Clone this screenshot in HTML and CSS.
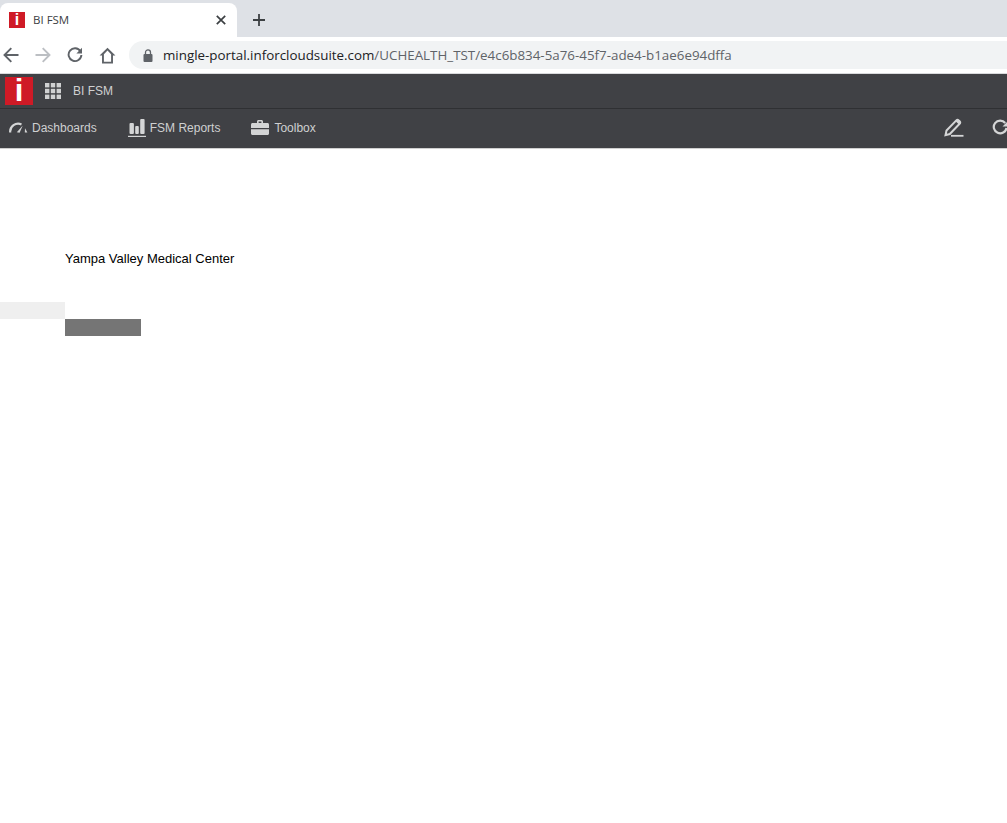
FILE: index.html
```html
<!DOCTYPE html>
<html lang="en">
<head>
<meta charset="utf-8">
<title>BI FSM</title>
<link rel="stylesheet" href="styles.css">
</head>
<body>
<div class="tabstrip">
  <div class="tab">
    <span class="favicon">i</span>
    <span class="tab-title">BI FSM</span>
    <svg class="tab-close" width="10" height="10" viewBox="0 0 10 10"><path d="M.8.8l8.4 8.4M9.2.8L.8 9.2" stroke="#3c4043" stroke-width="1.7" fill="none"/></svg>
  </div>
  <svg class="new-tab" width="12" height="12" viewBox="0 0 12 12"><path d="M6 0v12M0 6h12" stroke="#3c4043" stroke-width="1.8" fill="none"/></svg>
</div>
<div class="toolbar">
  <svg class="tb-icon" width="16" height="16" viewBox="0 0 16 16"><path d="M15.5 8H1.8M8.3 1.2L1.5 8l6.8 6.8" stroke="#5f6368" stroke-width="1.9" fill="none"/></svg>
  <svg class="tb-icon" width="16" height="16" viewBox="0 0 16 16"><path d="M.5 8h13.7M7.7 1.2L14.500 8l-6.800 6.800" stroke="#bcbfc3" stroke-width="1.900" fill="none"/></svg>
  <svg class="tb-icon" width="16" height="16" viewBox="0 0 16 16"><path d="M13.400 4.200A6.400 6.400 0 1 0 14.400 8" stroke="#5f6368" stroke-width="1.900" fill="none"/><path d="M15 .8v5.600H9.400z" fill="#5f6368"/></svg>
  <svg class="tb-home" width="17" height="17" viewBox="0 0 18 17"><path d="M9 .4L.6 8.600h2.600V17h11.600V8.600h2.600zM5.200 15V7.300L9 3.300l3.800 4V15z" fill="#5f6368" fill-rule="evenodd"/></svg>
  <div class="omnibox">
    <svg class="lock" width="10" height="13" viewBox="0 0 10 13"><rect x="0.5" y="5" width="9" height="8" rx="1" fill="#5f6368"/><path d="M2.500 5.500V3.400a2.500 2.500 0 0 1 5 0v2.100" stroke="#5f6368" stroke-width="1.300" fill="none"/></svg>
    <span class="url"><span class="host">mingle-portal.inforcloudsuite.com</span>/UCHEALTH_TST/e4c6b834-5a76-45f7-ade4-b1ae6e94dffa</span>
  </div>
</div>
<header class="app-bar">
  <span class="logo">i</span>
  <svg class="waffle" width="16" height="16" viewBox="0 0 16 16" fill="#d0d1d2"><rect width="4.400" height="4.400"/><rect x="5.800" width="4.400" height="4.400"/><rect x="11.600" width="4.400" height="4.400"/><rect y="5.800" width="4.400" height="4.400"/><rect x="5.800" y="5.800" width="4.400" height="4.400"/><rect x="11.600" y="5.800" width="4.400" height="4.400"/><rect y="11.600" width="4.400" height="4.400"/><rect x="5.800" y="11.600" width="4.400" height="4.400"/><rect x="11.600" y="11.600" width="4.400" height="4.400"/></svg>
  <span class="app-title">BI FSM</span>
</header>
<nav class="nav-bar">
  <a class="nav-item nav-dash">
    <svg width="19" height="11" viewBox="0 0 19 11"><path d="M1.200 10.500A8 8 0 0 1 12.500 2.400" stroke="#d4d5d6" stroke-width="2.200" fill="none"/><path d="M7.800 10.200l6-6.600-3.200 7.200z" fill="#d4d5d6"/><path d="M16 6.200l2.400 4.300h-2.600z" fill="#d4d5d6"/></svg>
    Dashboards
  </a>
  <a class="nav-item nav-reports">
    <svg width="18" height="19" viewBox="0 0 18 19" fill="#d4d5d6"><rect x="1.500" y="5" width="4.400" height="11" rx="1"/><rect x="7.200" y="8" width="3.600" height="8" rx="1"/><rect x="12.200" y="1" width="4.400" height="15" rx="1"/><rect y="17.800" width="18" height="1.200"/></svg>
    FSM Reports
  </a>
  <a class="nav-item nav-tool">
    <svg width="18" height="15" viewBox="0 0 18 15" fill="#d4d5d6"><path d="M6 3V1.500C6 .7 6.700 0 7.500 0h3c.8 0 1.500.7 1.500 1.500V3h-1.600V1.600H7.600V3z"/><path d="M1.500 3h15c.8 0 1.500.7 1.500 1.500V8H0V4.500C0 3.700.7 3 1.500 3z"/><path d="M0 9.300h18v4.200c0 .8-.7 1.500-1.500 1.500h-15C.7 15 0 14.300 0 13.500z"/></svg>
    Toolbox
  </a>
  <svg class="nav-edit" width="20" height="19" viewBox="0 0 20 19"><path d="M1.500 17.200l1-4.600L12.300 2.400a1.700 1.700 0 0 1 2.400 0l.9.900a1.700 1.700 0 0 1 0 2.400L5.800 16z" stroke="#d4d5d6" stroke-width="2" fill="none"/><path d="M11.500 3.200l4 3.800 1-1.500-.5-2.500-2.500-1z" fill="#d4d5d6"/><path d="M7 17.800h12.500" stroke="#d4d5d6" stroke-width="1.800"/></svg>
  <svg class="nav-refresh" width="17" height="17" viewBox="0 0 17 17"><path d="M13.200 4A6.400 6.400 0 1 0 14.500 9" stroke="#d4d5d6" stroke-width="2.200" fill="none"/><path d="M16.500 1.500v6h-6z" fill="#d4d5d6"/></svg>
</nav>
<main class="content">
  <p class="org">Yampa Valley Medical Center</p>
  <div class="row-light"></div>
  <div class="row-dark"></div>
</main>
</body>
</html>
```
FILE: styles.css
```css
html, body {
  margin: 0;
  height: 100%;
  overflow: hidden;
  background: #fff;
}
body {
  font-family: "Liberation Sans", Arial, sans-serif;
}
.tabstrip {
  height: 37px;
  box-sizing: border-box;
  padding-top: 3px;
  background: #dee1e6;
  display: flex;
}
.tab {
  width: 237px;
  height: 34px;
  box-sizing: border-box;
  padding-left: 9px;
  background: #fff;
  border-radius: 8px 8px 0 0;
  display: flex;
  align-items: center;
}
.favicon {
  width: 16px;
  height: 16px;
  background: #cf1a26;
  color: #fff;
  font: bold 16px/16px "Liberation Sans", sans-serif;
  text-align: center;
  flex: none;
}
.tab-title {
  margin: -2px 0 0 8px;
  font: 11.5px "Open Sans", sans-serif;
  color: #3c4043;
  flex: 1;
}
.tab-close {
  margin-right: 11px;
}
.new-tab {
  margin: 11px 0 0 16px;
}
.toolbar {
  height: 37px;
  box-sizing: border-box;
  padding-left: 3px;
  background: #fff;
  display: flex;
  align-items: center;
  border-bottom: 1px solid #d9dadc;
}
.tb-icon {
  margin-right: 16px;
  flex: none;
}
.tb-home {
  margin-right: 13px;
  flex: none;
}
.omnibox {
  flex: 1;
  height: 28px;
  padding-left: 14px;
  background: #f1f3f4;
  border-radius: 14px 0 0 14px;
  display: flex;
  align-items: center;
  min-width: 0;
}
.lock {
  flex: none;
  margin-right: 10px;
}
.url {
  font: 13.37px "Open Sans", sans-serif;
  color: #5f6368;
  white-space: nowrap;
}
.host {
  color: #202124;
}
.app-bar {
  height: 35px;
  box-sizing: border-box;
  background: #404145;
  border-bottom: 1px solid #2f3033;
  padding: 3px 0 0 5px;
  display: flex;
  align-items: flex-start;
}
.logo {
  width: 28px;
  height: 28px;
  background: #cf1a26;
  color: #fff;
  font: bold 31px/28px "Liberation Sans", sans-serif;
  text-align: center;
  flex: none;
}
.waffle {
  margin: 6px 0 0 12px;
}
.app-title {
  margin: 7px 0 0 12px;
  font-size: 12px;
  line-height: 15px;
  color: #cfd0d1;
}
.nav-bar {
  height: 40px;
  box-sizing: border-box;
  background: #404145;
  display: flex;
  align-items: center;
  padding: 0 0 2px 9px;
  border-bottom: 1px solid #cfcfcf;
}
.nav-item {
  display: flex;
  align-items: center;
  font-size: 12px;
  color: #cfd0d1;
  gap: 4px;
}
.nav-reports {
  margin-left: 31px;
  gap: 4px;
}
.nav-tool {
  margin-left: 31px;
  gap: 5px;
}
.nav-edit {
  margin-left: auto;
}
.nav-refresh {
  margin: 0 -2px 0 28px;
  flex: none;
}
.content {
  padding-top: 102px;
}
.org {
  margin: 0 0 0 65px;
  font-size: 13px;
  line-height: 16px;
  color: #000;
}
.row-light {
  width: 65px;
  height: 17px;
  margin-top: 35px;
  background: #efefef;
}
.row-dark {
  width: 76px;
  height: 17px;
  margin-left: 65px;
  background: #757575;
}
```
